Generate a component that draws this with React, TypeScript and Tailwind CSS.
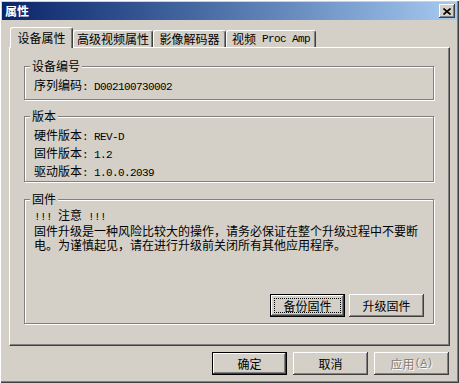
import React from "react";

const cjk = "font-['Noto_Sans_CJK_SC','Noto_Sans',sans-serif]";
const mono = "font-['Liberation_Mono',monospace] text-[11px] tracking-[-0.6px]";
const bevel =
  "shadow-[inset_-1px_-1px_#404040,inset_1px_1px_#ffffff,inset_-2px_-2px_#808080,inset_2px_2px_#d4d0c8]";
const etched = "border border-[#808080] shadow-[1px_1px_0_#ffffff,inset_1px_1px_0_#ffffff]";

type BtnProps = {
  children: React.ReactNode;
  isDefault?: boolean;
  focus?: boolean;
  disabled?: boolean;
};

const Btn = ({ children, isDefault, focus, disabled }: BtnProps) => (
  <div className={`w-[75px] h-[23px] flex ${isDefault ? "border border-black" : ""}`}>
    <div className={`flex-1 flex bg-[#d4d0c8] p-[3px] ${bevel}`}>
      <div
        className={`flex-1 flex items-center justify-center leading-none ${
          focus ? "border border-dotted border-black" : ""
        } ${disabled ? "text-[#808080] [text-shadow:1px_1px_0_#ffffff]" : "text-black"}`}
      >
        {children}
      </div>
    </div>
  </div>
);

const Group = ({
  title,
  className,
  children,
}: {
  title: string;
  className: string;
  children: React.ReactNode;
}) => (
  <div className={`relative ${etched} ${className}`}>
    <span className="absolute left-[5px] -top-[8px] px-[2px] bg-[#d4d0c8] leading-[14px]">{title}</span>
    {children}
  </div>
);

const Tab = ({ label, width, active }: { label: React.ReactNode; width: string; active?: boolean }) => (
  <div
    className={`${width} ${
      active ? "h-[21px] -mb-[1px] relative z-10" : "h-[17px]"
    } flex items-center justify-center bg-[#d4d0c8] border-t border-l border-r border-t-white border-l-white border-r-[#404040] rounded-t-[3px] shadow-[inset_-1px_0_#808080] leading-none whitespace-nowrap`}
  >
    {label}
  </div>
);

export default function App() {
  return (
    <div
      className={`w-[459px] h-[383px] bg-[#d4d0c8] p-[2px] flex flex-col text-[12px] text-black ${cjk} shadow-[inset_1px_1px_#ffffff,inset_-1px_-1px_#404040,inset_-2px_-2px_#808080]`}
    >
      {/* title bar */}
      <div className="h-[18px] flex items-center justify-between bg-linear-to-r from-[#0a246a] to-[#a6caf0] pl-[3px] pr-[2px]">
        <span className="text-white font-bold text-[12px] leading-none">属性</span>
        <div className={`w-[16px] h-[14px] bg-[#d4d0c8] flex items-center justify-center ${bevel}`}>
          <svg width="8" height="7" viewBox="0 0 8 7">
            <path d="M0.5 0.5 L7.5 6.5 M7.5 0.5 L0.5 6.5" stroke="black" strokeWidth="1.6" />
          </svg>
        </div>
      </div>

      <div className="px-[7px] pt-[7px] flex flex-col">
        {/* tabs */}
        <div className="h-[20px] flex items-end pl-[1px]">
          <Tab label="设备属性" width="w-[63px]" active />
          <Tab label="高级视频属性" width="w-[80px]" />
          <Tab label="影像解码器" width="w-[73px]" />
          <Tab
            label={
              <>
                视频<span className={mono}>&nbsp;Proc Amp</span>
              </>
            }
            width="w-[90px]"
          />
        </div>

        {/* panel */}
        <div className="h-[299px] border-l border-t border-r border-b border-l-white border-t-white border-r-[#404040] border-b-[#404040] shadow-[inset_-1px_-1px_#808080] pl-[14px] pr-[15px] pt-[18px] flex flex-col">
          <Group title="设备编号" className="h-[34px] pt-[11px] pl-[9px]">
            <div className="leading-[14px] whitespace-nowrap">
              序列编码<span className={mono}>: D002100730002</span>
            </div>
          </Group>

          <Group title="版本" className="mt-[16px] h-[66px] pt-[10px] pl-[9px]">
            <div className="leading-[16px] whitespace-nowrap">
              <div>
                硬件版本<span className={mono}>: REV-D</span>
              </div>
              <div>
                固件版本<span className={mono}>: 1.2</span>
              </div>
              <div>
                驱动版本<span className={mono}>: 1.0.0.2039</span>
              </div>
            </div>
          </Group>

          <Group title="固件" className="mt-[17px] h-[125px] pt-[8px] pl-[9px] pr-[9px] pb-[6px] flex flex-col">
            <div className="leading-[14px] whitespace-nowrap">
              <div>
                <span className={mono}>!!! </span>注意<span className={mono}> !!!</span>
              </div>
              <div>固件升级是一种风险比较大的操作，请务必保证在整个升级过程中不要断</div>
              <div>电。为谨慎起见，请在进行升级前关闭所有其他应用程序。</div>
            </div>
            <div className="mt-auto flex justify-end gap-[4px]">
              <Btn isDefault focus>
                备份固件
              </Btn>
              <Btn>升级固件</Btn>
            </div>
          </Group>
        </div>

        {/* dialog buttons */}
        <div className="mt-[6px] flex justify-end gap-[6px] pr-[1px]">
          <Btn isDefault>确定</Btn>
          <Btn>取消</Btn>
          <Btn disabled>
            应用
            <span className={mono}>
              (<span className="underline">A</span>)
            </span>
          </Btn>
        </div>
      </div>
    </div>
  );
}
